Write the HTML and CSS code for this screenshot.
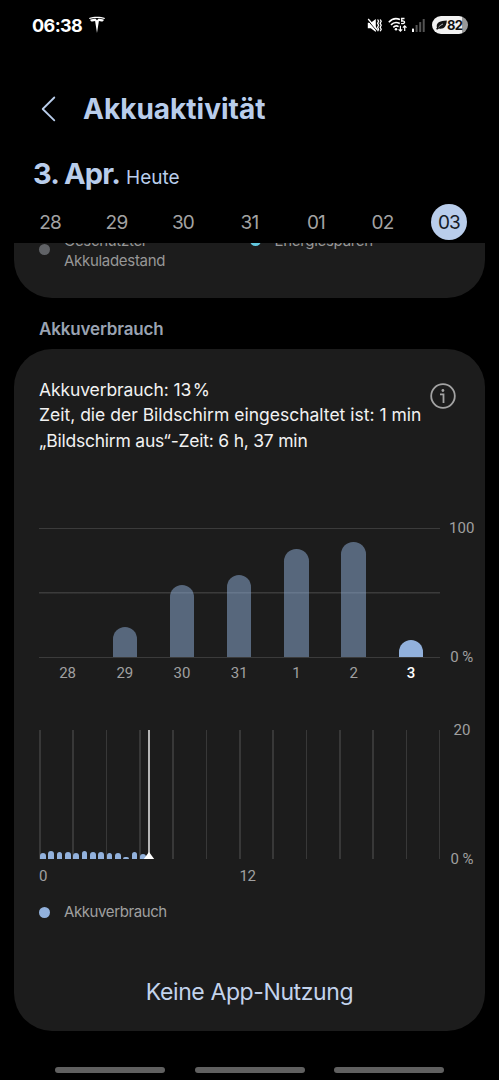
FILE: index.html
```
<!DOCTYPE html>
<html lang="de">
<head>
    <meta charset="UTF-8">
    <meta name="viewport" content="width=device-width, initial-scale=1.0">
    <title>Akkuaktivität</title>
    <link rel="stylesheet" href="styles.css">
</head>
<body>

<div class="screen">

    <header class="header">
        <div class="status-bar">
            <div class="status-left">
                <span class="clock">06:38</span>
                <svg class="tesla-icon" width="18" height="18" viewBox="0 0 18 18" fill="#fff">
                    <path d="M1 1.9C5.5.4 12.5.4 17 1.9L16.5 2.9C12 1.7 6 1.7 1.5 2.9Z"/>
                    <path d="M2 3.7C4 3 6.3 2.8 7.6 2.8L9 4.2 10.4 2.8C11.7 2.8 14 3 16 3.7 15.5 5 14.6 5.5 13.5 5.6 12.8 5.1 11.8 4.9 10.9 4.9L9 17 7.1 4.9C6.2 4.9 5.2 5.1 4.5 5.6 3.4 5.5 2.5 5 2 3.7Z"/>
                </svg>
            </div>
            <div class="status-right">
                <svg class="mute-icon" width="15" height="15" viewBox="0 0 15 15" fill="none" stroke="#fff">
                    <path d="M.8 4.8H3.8L8.8 1V14L3.8 10.2H.8Z" fill="#fff" stroke="none"/>
                    <path d="M.3 1.8L9.8 12.8" stroke="#000" stroke-width="1"/>
                    <path d="M1.2 1L10.5 12" stroke-width="1.3"/>
                    <path d="M10.6 1.5l1 1.8-1 2 1 2-1 2 1 2-1 2M13.2 1.5l1 1.8-1 2 1 2-1 2 1 2-1 2" stroke-width="1.3"/>
                </svg>
                <svg class="wifi-icon" width="20" height="16" viewBox="0 0 20 16" fill="none" stroke="#fff" stroke-width="1.6">
                    <path d="M.8 5.2C4 1.7 8.5 1 12 2.6M3 7.9C5.3 5.4 8.6 4.9 11.8 6.5M5.3 10.4C6.8 8.8 8.9 8.6 10.6 9.6"/>
                    <circle cx="8" cy="12.3" r="1.3" fill="#fff" stroke="none"/>
                    <path d="M16.5 1.5H13.7V4.1C17.8 3.3 17.4 7.5 13.1 6.4" stroke-width="1.3"/>
                    <path d="M12.4 8.7V14M10.6 12.3L12.4 14.2 14.2 12.3M16.7 14V9M14.9 10.7L16.7 8.8 18.5 10.7" stroke-width="1.2"/>
                </svg>
                <svg class="signal-icon" width="13" height="14" viewBox="0 0 13 14">
                    <rect x="0" y="10.5" width="2" height="3.5" rx=".6" fill="#fff"/>
                    <rect x="3.6" y="7" width="2" height="7" rx=".6" fill="#555"/>
                    <rect x="7.2" y="4" width="2" height="10" rx=".6" fill="#555"/>
                    <rect x="10.7" y="1" width="2" height="13" rx=".6" fill="#555"/>
                </svg>
                <div class="battery">
                    <svg width="11" height="10" viewBox="0 0 11 10">
                        <path d="M1 7.8C-.3 3 3 .8 10.8.5 10.6 6 8 9.6 3 8.6L1 9.8.1 8.8Z" fill="#111"/>
                        <path d="M2.5 7.2C4 5.600 5.500 4.600 7 4" stroke="#f2f2f2" stroke-width=".7" fill="none"/>
                    </svg>
                    <span>82</span>
                </div>
            </div>
        </div>

        <div class="title-bar">
            <svg class="back-icon" width="15" height="26" viewBox="0 0 15 26" fill="none" stroke="#b9cdeb" stroke-width="1.8" stroke-linecap="round" stroke-linejoin="round">
                <path d="M13.3 1.5L1.7 13 13.3 24.3"/>
            </svg>
            <h1>Akkuaktivität</h1>
        </div>

        <div class="date-line">
            <span class="date">3. Apr.</span>
            <span class="today">Heute</span>
        </div>

        <div class="days">
            <span>28</span>
            <span>29</span>
            <span>30</span>
            <span>31</span>
            <span>01</span>
            <span>02</span>
            <span class="selected">03</span>
        </div>
    </header>

    <section class="card legend-card">
        <div class="legend-item">
            <i class="dot grey"></i>
            <p>Geschützter<br>Akkuladestand</p>
        </div>
        <div class="legend-item saving">
            <i class="dot cyan"></i>
            <p>Energiesparen</p>
        </div>
    </section>

    <h2 class="section-title">Akkuverbrauch</h2>

    <section class="card usage-card">
        <div class="summary">
            <div class="summary-text">
                <p class="level">Akkuverbrauch: 13&#8202;%</p>
                <p>Zeit, die der Bildschirm eingeschaltet ist: 1 min</p>
                <p class="screen-off">„Bildschirm aus“-Zeit: 6 h, 37 min</p>
            </div>
            <svg class="info-icon" width="26" height="26" viewBox="0 0 26 26" fill="none" stroke="#a3a3a3" stroke-width="1.8">
                <circle cx="13" cy="13" r="11.8"/>
                <circle cx="12.9" cy="7.5" r="1.4" fill="#a3a3a3" stroke="none"/>
                <path d="M10 11.3H13.5V20"/>
            </svg>
        </div>

        <div class="chart">
            <div class="week-plot" id="week"></div>
            <div class="scale"><span>100</span><span>0 %</span></div>
        </div>
        <div class="week-labels">
            <span>28</span>
            <span>29</span>
            <span>30</span>
            <span>31</span>
            <span>1</span>
            <span>2</span>
            <span class="current">3</span>
        </div>

        <div class="chart day-chart">
            <div class="day-plot">
                <div class="hours" id="hours"></div>
                <svg class="now" width="12" height="129" viewBox="0 0 12 129">
                    <path d="M6 0V124" stroke="#dedede" stroke-width="1.6"/>
                    <path d="M6 122L11.2 129H.8Z" fill="#fff"/>
                </svg>
            </div>
            <div class="scale"><span>20</span><span>0 %</span></div>
        </div>
        <div class="hour-labels">
            <span>0</span>
            <span>12</span>
        </div>

        <div class="usage-legend">
            <i class="dot blue"></i>
            <span>Akkuverbrauch</span>
        </div>

        <p class="no-usage">Keine App-Nutzung</p>
    </section>

    <nav class="nav-bar">
        <i></i>
        <i></i>
        <i></i>
    </nav>

</div>

<script>

// bar heights in px, the plots are 129px high
const weekData = [0, 30.5, 72, 82.5, 108.5, 115, 17];
const hourData = [6, 8, 7, 7, 6, 8, 7, 7, 6, 6, 2, 7, 5];

function addBars(id, data) {
    const plot = document.getElementById(id);
    data.forEach(value => {
        const bar = document.createElement("div");
        bar.classList.add("bar");
        bar.style.height = value + "px";
        plot.appendChild(bar);
    });
}

addBars("week", weekData);
addBars("hours", hourData);

</script>
</body>
</html>
```

FILE: styles.css
```
* {
    box-sizing: border-box;
    margin: 0;
    padding: 0;
}
body {
    background: #000;
    color: #f2f2f2;
    font-family: Inter, Roboto, sans-serif;
}
.screen {
    width: 499px;
    height: 1080px;
    overflow: hidden;
    display: flex;
    flex-direction: column;
    white-space: nowrap;
}
.header {
    height: 243px;
    flex: none;
}
.status-bar {
    height: 50px;
    display: flex;
    justify-content: space-between;
    align-items: center;
    padding: 0 31px 0 32px;
}
.status-left, .status-right {
    display: flex;
    align-items: center;
}
.clock {
    font-size: 18px;
    font-weight: 700;
    color: #fff;
    letter-spacing: -0.6px;
}
.tesla-icon {
    margin-left: 6px;
}
.wifi-icon {
    margin-left: 6px;
}
.signal-icon {
    margin-left: 4px;
}
.battery {
    width: 36px;
    height: 18px;
    margin-left: 7px;
    border-radius: 9px;
    background: linear-gradient(90deg, #f2f2f2 82%, #999 82%);
    display: flex;
    align-items: center;
    padding-left: 4px;
    font-size: 13px;
    font-weight: 700;
    color: #111;
    letter-spacing: -0.8px;
}
.title-bar {
    height: 84px;
    padding: 34px 0 0 41px;
    display: flex;
    align-items: center;
}
.title-bar h1 {
    margin-left: 27px;
    font-size: 28px;
    line-height: 34px;
    font-weight: 700;
    color: #b9cdeb;
}
.date-line {
    height: 70px;
    padding: 22px 0 0 33px;
    display: flex;
    align-items: baseline;
}
.date {
    font-size: 29px;
    font-weight: 700;
    letter-spacing: -0.9px;
    color: #b9cdeb;
}
.today {
    margin-left: 6px;
    font-size: 19px;
    color: #b9cdeb;
}
.days {
    display: grid;
    grid-template-columns: repeat(7, 66.5px);
    justify-content: center;
    justify-items: center;
    font-size: 19px;
    line-height: 37px;
    letter-spacing: -0.8px;
    color: #a3a3a3;
}
.days .selected {
    width: 36px;
    height: 36px;
    border-radius: 50%;
    background: #b9cdeb;
    color: #161b25;
    text-align: center;
}
.card {
    margin: 0 14px;
    background: #1c1c1c;
    flex: none;
}
.legend-card {
    height: 55px;
    border-radius: 0 0 38px 38px;
    overflow: hidden;
    display: flex;
    padding-left: 25px;
    color: #979797;
    font-size: 15px;
    line-height: 20px;
    letter-spacing: -0.3px;
}
.legend-item {
    width: 210.5px;
    display: flex;
    gap: 14px;
    margin-top: -12px;
}
.legend-item .dot {
    margin-top: 13px;
}
.legend-item.saving .dot {
    margin-top: 3.5px;
}
.dot {
    width: 11px;
    height: 11px;
    border-radius: 50%;
    flex: none;
}
.grey {
    background: #606266;
}
.cyan {
    background: #62c8df;
}
.blue {
    background: #92b1dc;
}
.section-title {
    height: 51px;
    padding-left: 39px;
    font-size: 17px;
    line-height: 62px;
    font-weight: 600;
    letter-spacing: -0.15px;
    color: #9aa3b2;
    flex: none;
}
.usage-card {
    height: 682px;
    border-radius: 38px;
    padding: 28px 0 0 25px;
    color: #a0a0a0;
}
.summary {
    height: 151px;
    display: flex;
    align-items: flex-start;
}
.summary-text {
    width: 391px;
    font-size: 17.5px;
    line-height: 25.3px;
    color: #f2f2f2;
}
.level {
    letter-spacing: -0.1px;
}
.screen-off {
    letter-spacing: -0.22px;
}
.info-icon {
    margin-top: 6px;
}
.chart {
    display: flex;
    height: 129px;
}
.week-plot {
    width: 400.5px;
    height: 130px;
    flex: none;
    display: grid;
    grid-template-columns: repeat(7, 1fr);
    align-items: end;
    justify-items: center;
    background: linear-gradient(#3b3b3b, #3b3b3b) 0 63px / 100% 1.5px no-repeat;
    border-top: 1.5px solid #3b3b3b;
    border-bottom: 1.5px solid #3b3b3b;
}
.week-plot .bar {
    width: 24.5px;
    border-radius: 12.25px 12.25px 0 0;
    background: rgba(146, 177, 220, 0.5);
}
.week-plot .bar:last-child {
    background: #92b1dc;
}
.scale {
    flex: 1;
    margin: -9px 0;
    padding-right: 1px;
    display: flex;
    flex-direction: column;
    justify-content: space-between;
    align-items: center;
    font: 15px/18px Roboto, sans-serif;
}
.week-labels {
    width: 400.5px;
    height: 73px;
    padding-top: 7px;
    display: grid;
    grid-template-columns: repeat(7, 1fr);
    justify-items: center;
    font: 15px/18px Roboto, sans-serif;
}
.current {
    color: #fff;
    font-weight: 500;
}
.day-plot {
    width: 401.5px;
    flex: none;
    position: relative;
    margin-left: -0.5px;
    background: repeating-linear-gradient(90deg, #383838 0 1.5px, transparent 1.5px 33.35px);
}
.hours {
    height: 129px;
    padding-left: 1.5px;
    display: flex;
    align-items: flex-end;
    gap: 2.65px;
}
.hours .bar {
    width: 5.7px;
    border-radius: 3px 3px 0 0;
    background: #92b1dc;
}
.now {
    position: absolute;
    left: 104px;
    top: 0;
}
.hour-labels {
    display: grid;
    grid-template-columns: 200.5px 1fr;
    padding-top: 8px;
    font: 15px/18px Roboto, sans-serif;
    letter-spacing: -0.5px;
}
.usage-legend {
    margin-top: 18px;
    display: flex;
    align-items: center;
    gap: 14px;
    font-size: 15px;
    line-height: 18px;
    letter-spacing: -0.4px;
}
.no-usage {
    margin: 56px 25px 0 0;
    text-align: center;
    font-size: 23px;
    line-height: 30px;
    letter-spacing: -0.4px;
    color: #c3d3ec;
}
.nav-bar {
    display: flex;
    justify-content: center;
    gap: 29.5px;
    padding-top: 36px;
}
.nav-bar i {
    width: 110px;
    height: 6px;
    border-radius: 3px;
    background: #606060;
}
```
